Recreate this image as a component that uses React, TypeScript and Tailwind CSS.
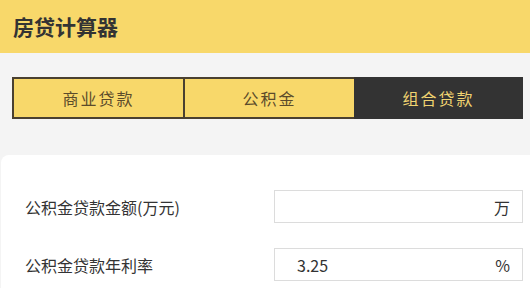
import React from "react";

export default function App() {
  const font = { fontFamily: '"Noto Sans CJK SC", "Noto Sans", sans-serif' };
  return (
    <div className="w-[530px] h-[288px] overflow-hidden bg-[#f4f4f4]" style={font}>
      <div className="h-[53px] bg-[#f8d86a] flex items-center pl-[13px]">
        <span className="text-[21px] font-bold text-[#333333] leading-none">房贷计算器</span>
      </div>
      <div className="pt-[24px] pl-[12px] pr-[7px]">
        <div className="flex h-[42px] border-2 border-[#4a4030]">
          <div className="flex-1 flex items-center justify-center bg-[#f8d86a] text-[#5b4b2b] text-[16px] tracking-[2px] border-r-2 border-[#4a4030]">
            商业贷款
          </div>
          <div className="flex-1 flex items-center justify-center bg-[#f8d86a] text-[#5b4b2b] text-[16px] tracking-[2px]">
            公积金
          </div>
          <div className="flex-1 flex items-center justify-center bg-[#333333] text-[#f1d471] text-[16px] tracking-[2px] -my-[2px] -mr-[2px]">
            组合贷款
          </div>
        </div>
      </div>
      <div className="mt-[36px] ml-[1px] bg-white rounded-tl-[8px] h-[200px] pt-[35px] pl-[24px] pr-[7px] flex flex-col gap-[25px]">
        <div className="flex items-center justify-between h-[33px]">
          <span className="text-[16px] text-[#333333]">公积金贷款金额(万元)</span>
          <div className="w-[249px] h-[33px] border border-[#dcdcdc] flex items-center justify-end pr-[12px] text-[16px] text-[#333333]">
            万
          </div>
        </div>
        <div className="flex items-center justify-between h-[33px]">
          <span className="text-[16px] text-[#333333]">公积金贷款年利率</span>
          <div className="w-[249px] h-[33px] border border-[#dcdcdc] flex items-center justify-between pl-[22px] pr-[12px] text-[16px] text-[#333333]">
            <span>3.25</span>
            <span>%</span>
          </div>
        </div>
      </div>
    </div>
  );
}
